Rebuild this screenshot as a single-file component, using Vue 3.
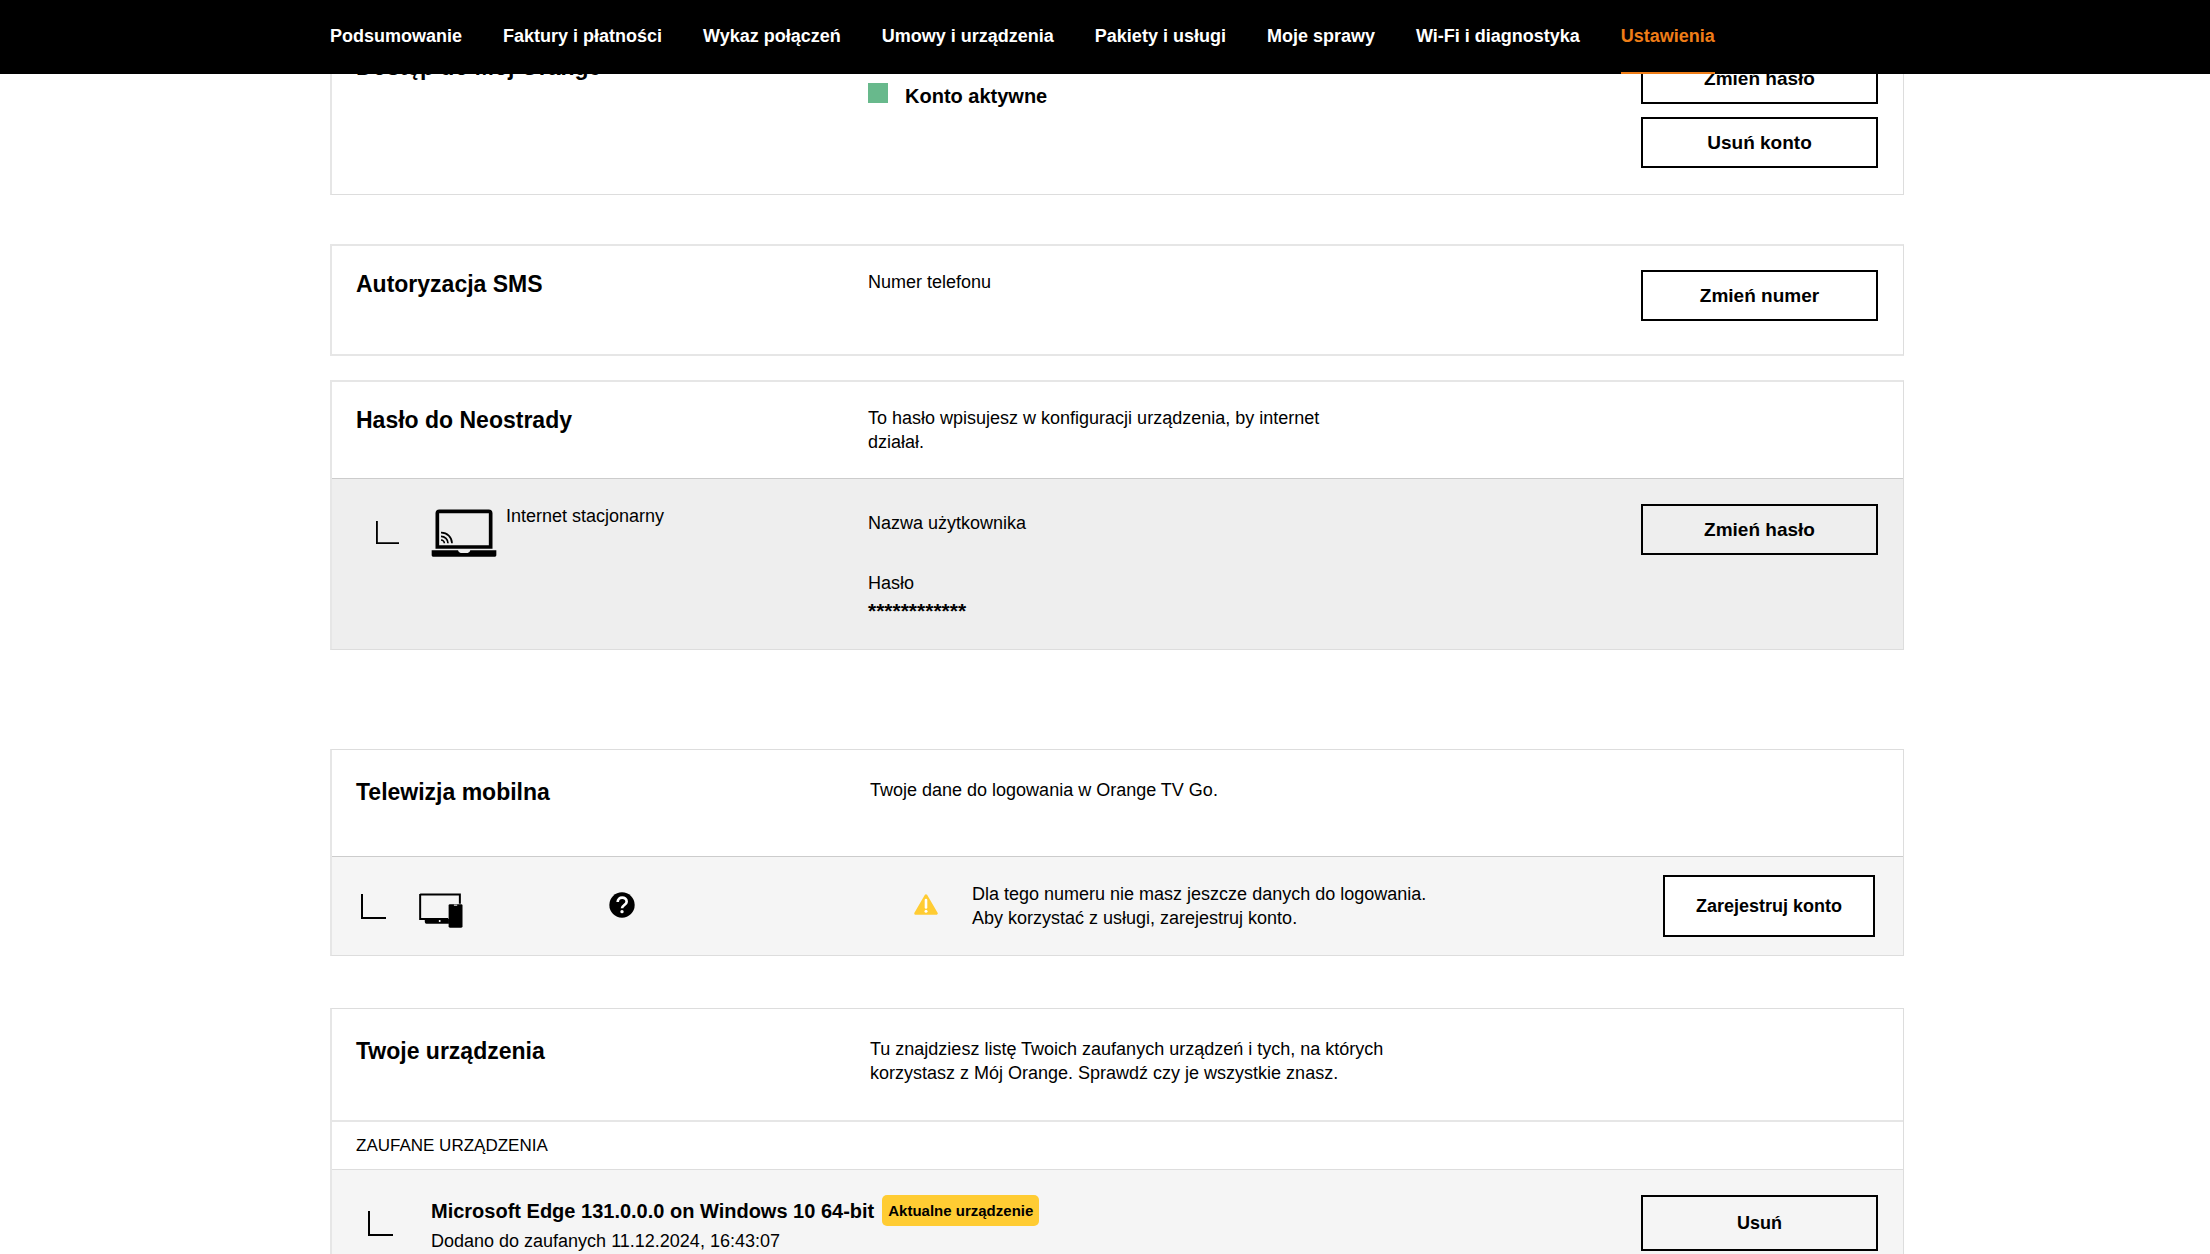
<script setup>
const navItems = [
  { label: 'Podsumowanie' },
  { label: 'Faktury i płatności' },
  { label: 'Wykaz połączeń' },
  { label: 'Umowy i urządzenia' },
  { label: 'Pakiety i usługi' },
  { label: 'Moje sprawy' },
  { label: 'Wi-Fi i diagnostyka' },
  { label: 'Ustawienia', active: true }
]
</script>

<template>
  <div class="page">
    <header class="topbar">
      <nav class="nav">
        <a
          v-for="item in navItems"
          :key="item.label"
          href="#"
          class="nav-link"
          :class="{ active: item.active }"
        >{{ item.label }}</a>
      </nav>
    </header>

    <main class="content">
      <section class="card card-access">
        <div class="row">
          <h2>Dostęp do Mój Orange</h2>
          <p class="status"><span class="status-dot"></span>Konto aktywne</p>
          <div class="actions">
            <button type="button" class="btn">Zmień hasło</button>
            <button type="button" class="btn">Usuń konto</button>
          </div>
        </div>
      </section>

      <section class="card card-sms soft">
        <div class="row">
          <h2>Autoryzacja SMS</h2>
          <p>Numer telefonu</p>
          <button type="button" class="btn">Zmień numer</button>
        </div>
      </section>

      <section class="card card-dsl soft">
        <div class="row">
          <h2>Hasło do Neostrady</h2>
          <p class="lead">To hasło wpisujesz w konfiguracji urządzenia, by internet działał.</p>
        </div>
        <div class="row sub sub-dark">
          <div class="service">
            <svg class="corner corner-small" viewBox="0 0 25 25" aria-hidden="true">
              <path d="M1 0V24H25" fill="none" stroke="#000" stroke-width="2" />
            </svg>
            <svg class="laptop" viewBox="362 114 198 150" aria-hidden="true">
              <path d="M381 231V130q0-6 6-6H535q6 0 6 6V231Z" fill="none" stroke="#000" stroke-width="11" />
              <path d="M364 241H443q2 8 8 8H472q6 0 8-8H558V256q0 4-4 4H368q-4 0-4-4Z" />
              <g fill="none" stroke="#000" stroke-width="5">
                <path d="M392 188A32 32 0 0 1 425 220" />
                <path d="M392 199A21 21 0 0 1 413 220" />
                <path d="M392 210A10 10 0 0 1 402 220" />
              </g>
            </svg>
            <p>Internet stacjonarny</p>
          </div>
          <dl class="credentials">
            <dt>Nazwa użytkownika</dt>
            <dt>Hasło</dt>
            <dd>************</dd>
          </dl>
          <button type="button" class="btn">Zmień hasło</button>
        </div>
      </section>

      <section class="card card-tv wide">
        <div class="row">
          <h2>Telewizja mobilna</h2>
          <p class="lead">Twoje dane do logowania w Orange TV Go.</p>
        </div>
        <div class="row sub">
          <div class="tv-service">
            <svg class="corner" viewBox="0 0 25 25" aria-hidden="true">
              <path d="M1 0V24H25" fill="none" stroke="#000" stroke-width="2" />
            </svg>
            <svg class="tv" viewBox="328 432 135 136" aria-hidden="true">
              <path d="M331 464H451V492M331 462V538H416" fill="none" stroke="#000" stroke-width="6" />
              <path d="M345 538H418V552H350q-5 0-5-5Z" />
              <circle cx="390" cy="544" r="3" fill="#fff" />
              <rect x="417" y="493" width="42" height="71" rx="4" />
              <path d="M433 496H443" stroke="#fff" stroke-width="3" />
            </svg>
            <button type="button" class="help" aria-label="Pomoc">
              <svg viewBox="0 0 78 78" aria-hidden="true">
                <circle cx="39" cy="39" r="38" />
                <path d="M26 30C26 12 53 13 53 29C53 39 39 39 39 49" fill="none" stroke="#fff" stroke-width="8" />
                <circle cx="39" cy="59" r="5" fill="#fff" />
              </svg>
            </button>
          </div>
          <div class="notice">
            <svg viewBox="0 0 24 21" aria-hidden="true">
              <path d="M12 1.5L22.500 19.500H1.500Z" fill="#fc3" stroke="#fc3" stroke-width="2.500" stroke-linejoin="round" />
              <path d="M12 6V13.500" stroke="#fff" stroke-width="2.600" stroke-linecap="round" />
              <circle cx="12" cy="17.300" r="1.500" fill="#fff" />
            </svg>
            <p>Dla tego numeru nie masz jeszcze danych do logowania.<br>Aby korzystać z usługi, zarejestruj konto.</p>
          </div>
          <button type="button" class="btn btn-register">Zarejestruj konto</button>
        </div>
      </section>

      <section class="card card-devices wide">
        <div class="row">
          <h2>Twoje urządzenia</h2>
          <p class="lead">Tu znajdziesz listę Twoich zaufanych urządzeń i tych, na których korzystasz z Mój Orange. Sprawdź czy je wszystkie znasz.</p>
        </div>
        <h3>ZAUFANE URZĄDZENIA</h3>
        <div class="device">
          <svg class="corner" viewBox="0 0 25 25" aria-hidden="true">
            <path d="M1 0V24H25" fill="none" stroke="#000" stroke-width="2" />
          </svg>
          <div class="device-info">
            <div class="device-title">
              <strong>Microsoft Edge 131.0.0.0 on Windows 10 64-bit</strong>
              <span class="badge">Aktualne urządzenie</span>
            </div>
            <p>Dodano do zaufanych 11.12.2024, 16:43:07</p>
          </div>
          <button type="button" class="btn btn-remove">Usuń</button>
        </div>
      </section>
    </main>
  </div>
</template>

<style>
body {
  background: #fff;
}
</style>

<style scoped>
.page {
  height: 100vh;
  overflow: hidden;
  color: #000;
  font-family: "Liberation Sans", Arial, sans-serif;
  font-size: 18px;
  line-height: 24px;
}

h2,
h3,
p,
dl,
dd {
  margin: 0;
}

.topbar {
  position: fixed;
  top: 0;
  left: 0;
  right: 0;
  z-index: 1;
  background: #000;
}

.nav {
  display: flex;
  gap: 41px;
  height: 74px;
  padding-left: 330px;
}

.nav-link {
  box-sizing: border-box;
  padding-top: 24px;
  border-bottom: 2px solid transparent;
  color: #fff;
  font-weight: 700;
  text-decoration: none;
  white-space: nowrap;
}

.nav-link.active {
  border-bottom-color: #ef7d17;
  color: #ef7d17;
}

.content {
  padding: 27px 306px 0 330px;
}

.card {
  border: 1px solid #ddd;
  border-left: 2px solid #e6e6e6;
}

.card.soft {
  border-top: 2px solid #e6e6e6;
}

.row {
  display: grid;
  grid-template-columns: 512px minmax(0, 1fr) auto;
  align-items: start;
  padding: 24px 25px 24px 24px;
}

.wide .row {
  grid-template-columns: 514px minmax(0, 1fr) auto;
  padding-top: 28px;
}

h2 {
  font-size: 23px;
  line-height: 28px;
}

.lead {
  max-width: 480px;
}

.wide .lead {
  max-width: 530px;
}

.btn {
  box-sizing: border-box;
  width: 237px;
  height: 51px;
  padding: 0;
  border: 2px solid #000;
  background: transparent;
  color: #000;
  font: 700 19px/22px "Liberation Sans", Arial, sans-serif;
}

.card-access .row {
  padding: 25px 25px 26px 24px;
}

.actions {
  display: grid;
  gap: 13px;
}

.status {
  display: flex;
  gap: 17px;
  padding-top: 30px;
  font-size: 20px;
  font-weight: 700;
  line-height: 26px;
}

.status-dot {
  width: 20px;
  height: 20px;
  background: #68b98c;
}

.card-sms {
  margin-top: 49px;
  border-bottom: 2px solid #e6e6e6;
}

.card-sms .row {
  padding-bottom: 33px;
}

.card-dsl {
  margin-top: 24px;
}

.row.sub {
  border-top: 1px solid #ccc;
  background: #f5f5f5;
}

.row.sub-dark {
  padding-top: 25px;
  padding-bottom: 26px;
  background: #eee;
}

.corner {
  flex: none;
  width: 25px;
  height: 25px;
}

.corner-small {
  width: 23px;
  height: 23px;
  margin: 17px 32px 0 20px;
}

.service {
  display: flex;
  align-items: flex-start;
}

.laptop {
  width: 66px;
  height: 50px;
  margin: 4px 9px 0 0;
}

.credentials {
  padding-top: 7px;
}

.credentials dt + dt {
  margin-top: 36px;
}

.credentials dd {
  padding-top: 4px;
  font-size: 21px;
  font-weight: 700;
}

.card-tv {
  margin-top: 99px;
}

.card-tv .row {
  padding-bottom: 50px;
}

.card-tv .row.sub {
  align-items: center;
  padding: 18px 28px 18px 24px;
}

.tv-service {
  display: flex;
  align-items: center;
  padding-left: 5px;
}

.tv {
  width: 45px;
  height: 45px;
  margin: 0 145px 0 33px;
}

.help {
  width: 26px;
  height: 26px;
  margin-bottom: 2px;
  padding: 0;
  border: 0;
  background: transparent;
}

.help svg {
  display: block;
}

.notice {
  display: flex;
  align-items: center;
  gap: 34px;
  padding-left: 44px;
}

.notice svg {
  width: 24px;
  height: 21px;
  margin-bottom: 4px;
}

.btn-register {
  width: 212px;
  height: 62px;
  background: #fff;
  font-size: 18px;
}

.card-devices {
  margin-top: 52px;
}

.card-devices .row {
  padding-bottom: 35px;
}

h3 {
  padding: 12px 24px 11px;
  border-top: 2px solid #e6e6e6;
  border-bottom: 1px solid #ddd;
  font-size: 17px;
  font-weight: 400;
}

.device {
  display: flex;
  align-items: flex-start;
  padding: 25px 25px 25px 36px;
  background: #f5f5f5;
}

.device .corner {
  margin-top: 16px;
}

.device-info {
  flex: 1;
  padding-left: 38px;
}

.device-title {
  display: flex;
  align-items: center;
  gap: 8px;
  margin-bottom: 3px;
  font-size: 20px;
}

.badge {
  padding: 4px 6px;
  border-radius: 5px;
  background: #fc3;
  font-size: 15px;
  font-weight: 700;
  line-height: 23px;
}

.btn-remove {
  height: 56px;
  font-size: 18px;
}
</style>
